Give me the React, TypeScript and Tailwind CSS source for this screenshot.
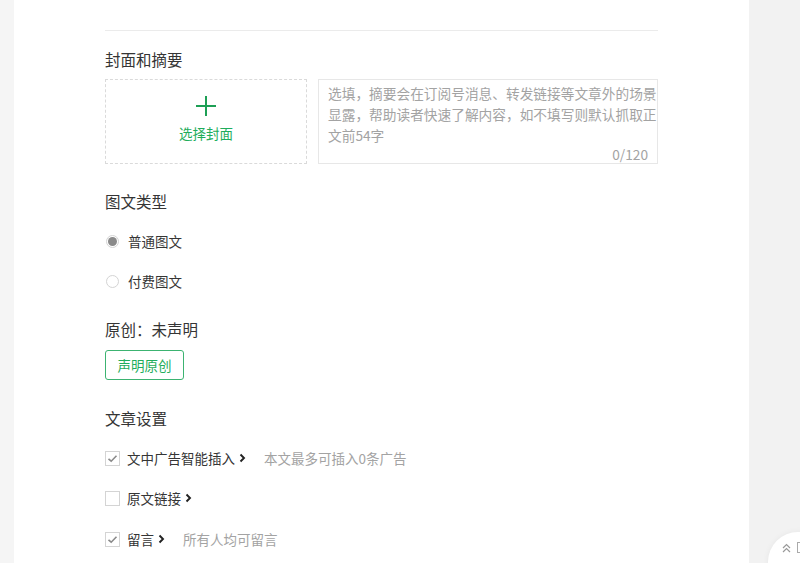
import React from "react";

const font = { fontFamily: '"Noto Sans CJK SC", "Noto Sans", sans-serif' };

function Chevron() {
  return (
    <svg width="7" height="10" viewBox="0 0 7 10" className="ml-[4px] shrink-0">
      <path d="M1.5 1.5 L5 5 L1.5 8.5" fill="none" stroke="#222" strokeWidth="1.9" />
    </svg>
  );
}

function Check({ checked }: { checked: boolean }) {
  return (
    <span className="w-[15px] h-[15px] border border-[#d4d4d4] bg-white flex items-center justify-center shrink-0">
      {checked && (
        <svg width="11" height="9" viewBox="0 0 11 9">
          <path d="M1.5 4.8 L4.2 7.2 L9.5 1.8" fill="none" stroke="#8a8a8a" strokeWidth="1.6" />
        </svg>
      )}
    </span>
  );
}

function Radio({ checked }: { checked: boolean }) {
  return (
    <span className="w-[13px] h-[13px] rounded-full border border-[#d4d4d4] bg-white flex items-center justify-center shrink-0">
      {checked && <span className="w-[9px] h-[9px] rounded-full bg-[#8a8a8a]" />}
    </span>
  );
}

export default function App() {
  return (
    <div className="relative w-full h-[563px] overflow-hidden flex bg-[#f5f5f5] text-[#353535]" style={font}>
      <div className="w-[14px] shrink-0 bg-[#f5f5f5]" />
      <div className="w-[735px] shrink-0 bg-white pl-[91px]">
        <div className="w-[553px] pt-[30px]">
          <div className="h-px bg-[#ebebeb]" />
          <div className="mt-[16px] text-[15.5px] leading-[24px]">封面和摘要</div>
          <div className="mt-[8px] flex gap-[11px]">
            <div className="w-[202px] h-[85px] border border-dashed border-[#dadada] flex flex-col items-center justify-center">
              <svg width="20" height="20" viewBox="0 0 20 20" className="mt-[-5px]">
                <path d="M10 0 V20 M0 10 H20" stroke="#1d9f55" strokeWidth="2" />
              </svg>
              <div className="mt-[7px] text-[13.5px] leading-[20px] text-[#1fad5c]">选择封面</div>
            </div>
            <div className="w-[340px] h-[85px] border border-[#e7e7e7] pl-[9px] pr-0 pt-[3px] flex flex-col justify-between">
              <div className="text-[13.7px] leading-[21px] text-[#a3a3a3]">
                选填，摘要会在订阅号消息、转发链接等文章外的场景显露，帮助读者快速了解内容，如不填写则默认抓取正文前54字
              </div>
              <div className="self-end mr-[9px] mb-[2px] text-[13.7px] leading-[14px] text-[#a3a3a3]">0/120</div>
            </div>
          </div>

          <div className="mt-[25px] text-[15.5px] leading-[24px]">图文类型</div>
          <div className="mt-[18px] flex items-center h-[20px] pl-[1px] gap-[9px] text-[13.5px]">
            <Radio checked />
            <span>普通图文</span>
          </div>
          <div className="mt-[20px] flex items-center h-[20px] pl-[1px] gap-[9px] text-[13.5px]">
            <Radio checked={false} />
            <span>付费图文</span>
          </div>

          <div className="mt-[26px] text-[15.5px] leading-[24px]">原创：未声明</div>
          <button className="mt-[9px] w-[79px] h-[30px] border border-[#3cb371] rounded-[3px] text-[13.5px] text-[#1fad5c] bg-white" style={font}>
            声明原创
          </button>

          <div className="mt-[26px] text-[15.5px] leading-[24px]">文章设置</div>
          <div className="mt-[18px] flex items-center h-[20px] text-[13.5px]">
            <Check checked />
            <span className="ml-[7px]">文中广告智能插入</span>
            <Chevron />
            <span className="ml-[18px] text-[#a3a3a3]">本文最多可插入0条广告</span>
          </div>
          <div className="mt-[20px] flex items-center h-[20px] text-[13.5px]">
            <Check checked={false} />
            <span className="ml-[7px]">原文链接</span>
            <Chevron />
          </div>
          <div className="mt-[21px] flex items-center h-[20px] text-[13.5px]">
            <Check checked />
            <span className="ml-[7px]">留言</span>
            <Chevron />
            <span className="ml-[18px] text-[#a3a3a3]">所有人均可留言</span>
          </div>
        </div>
      </div>
      <div className="flex-1 bg-[#f2f2f2]" />

      <div className="absolute left-[768px] top-[532px] w-[80px] h-[60px] rounded-full bg-white shadow-[0_0_6px_rgba(0,0,0,0.05)] flex items-start pt-[11px] pl-[14px] gap-[6px]">
        <svg width="9" height="10" viewBox="0 0 9 10">
          <path d="M1 5 L4.5 1.5 L8 5 M1 9 L4.5 5.5 L8 9" fill="none" stroke="#999" strokeWidth="1.2" />
        </svg>
        <span className="w-[8px] h-[11px] border border-[#aaa] mt-[-1px]" />
      </div>
    </div>
  );
}
